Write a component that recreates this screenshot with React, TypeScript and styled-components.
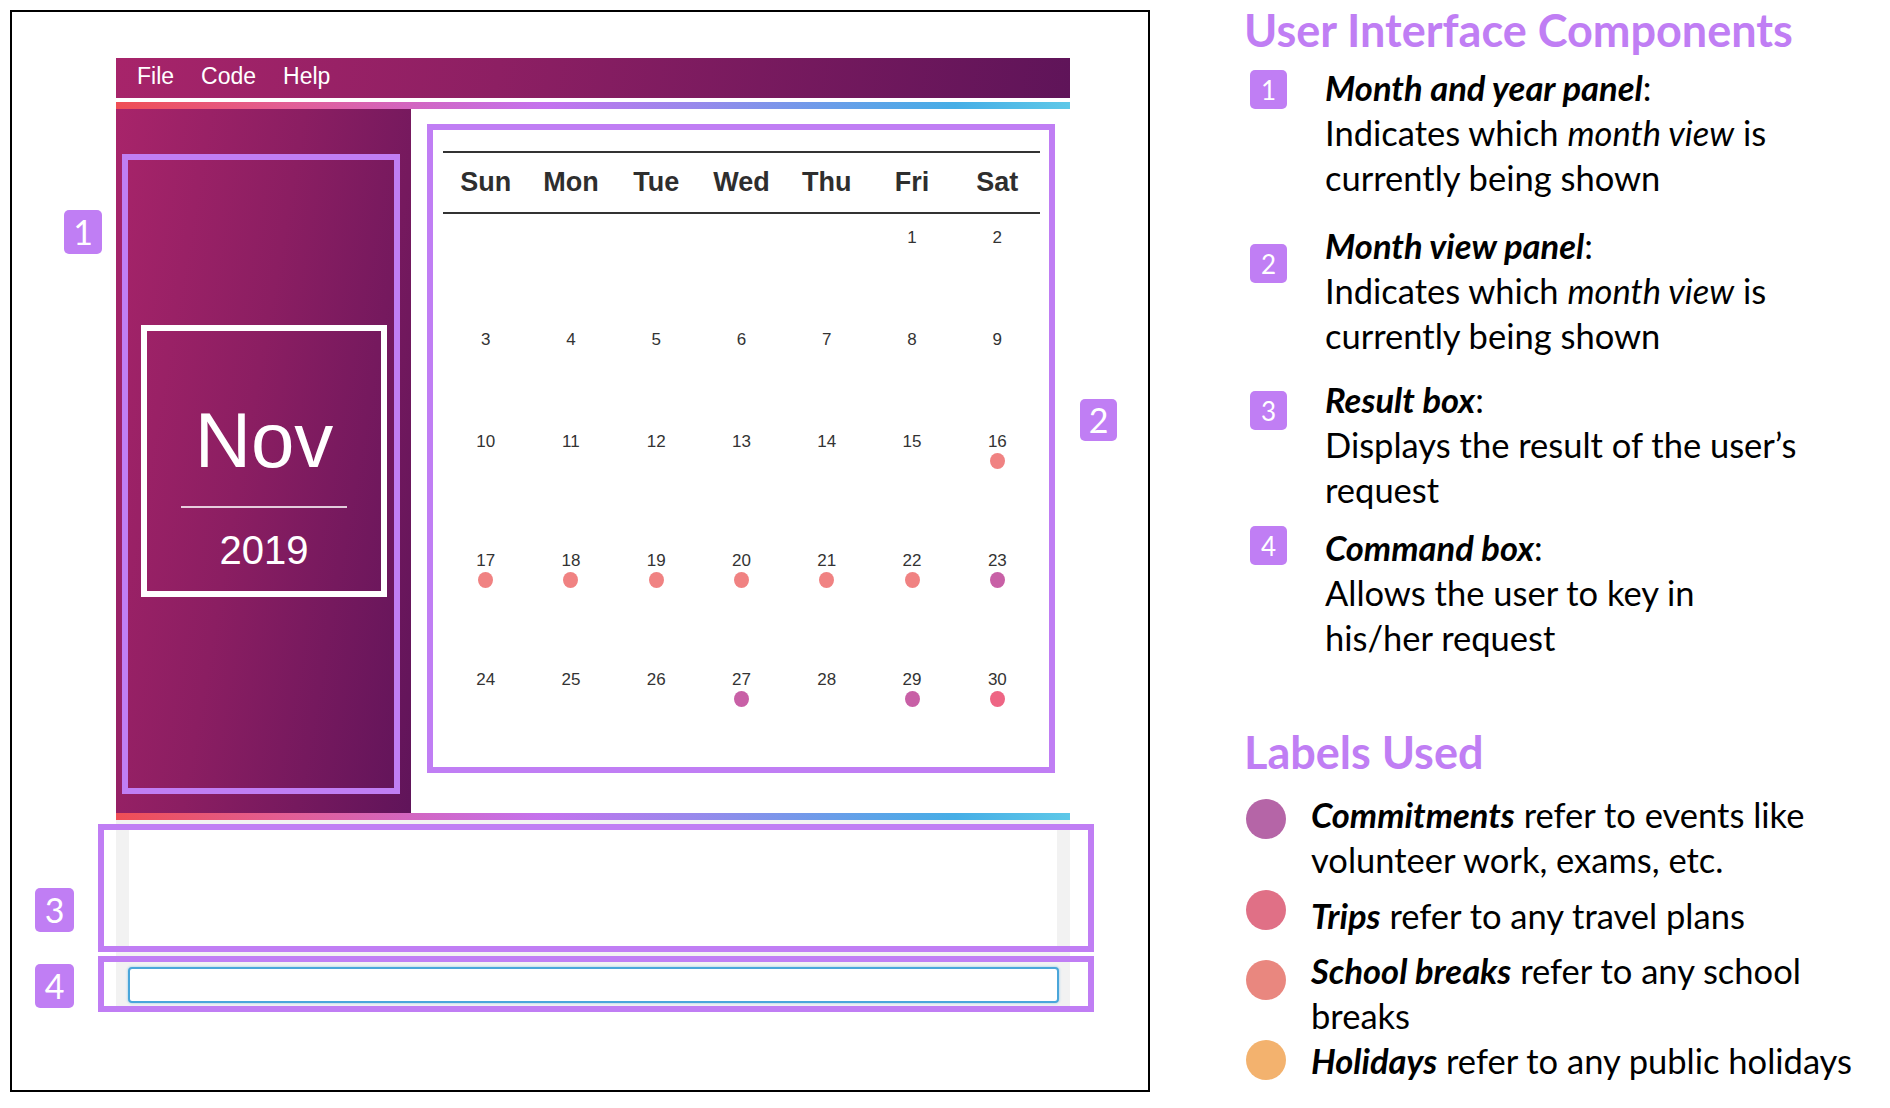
import React from "react";
import styled, { createGlobalStyle } from "styled-components";

const LAVENDER = "#c07ef4";

const GlobalStyle = createGlobalStyle`
  html, body {
    margin: 0;
    padding: 0;
    background: #fff;
  }
  body {
    font-family: "Liberation Sans", Arial, sans-serif;
  }
`;

const Page = styled.div`
  display: flex;
  align-items: flex-start;
  width: 1890px;
  height: 1108px;
  overflow: hidden;
`;

/* ---------- screenshot frame ---------- */

const Frame = styled.div`
  box-sizing: border-box;
  flex: none;
  width: 1140px;
  height: 1082px;
  margin: 10px 0 0 10px;
  border: 2px solid #000;
  padding: 46px 0 0 104px;
`;

const AppWindow = styled.div`
  width: 954px;
  display: flex;
  flex-direction: column;
`;

const MenuBar = styled.div`
  height: 40px;
  box-sizing: border-box;
  padding: 0 0 4px 21px;
  display: flex;
  align-items: flex-end;
  gap: 27px;
  background: linear-gradient(100deg, #a7246a 0%, #8d1f63 40%, #5f1459 100%);
`;

const MenuItem = styled.span`
  color: #fff;
  font-size: 23px;
  line-height: 36px;
`;

const Stripe = styled.div<{ $gapTop?: number }>`
  height: 7px;
  margin-top: ${(p) => p.$gapTop ?? 0}px;
  background: linear-gradient(
    to right,
    #ef4e55 0%,
    #e25e95 18%,
    #d166c4 32%,
    #c472ee 45%,
    #9a88ec 60%,
    #5aa4e8 80%,
    #46aee6 88%,
    #5ec8e8 100%
  );
`;

const AppBody = styled.div`
  display: flex;
  height: 704px;
`;

const MonthPanel = styled.div`
  box-sizing: border-box;
  width: 295px;
  display: flex;
  padding: 45px 11px 19px 6px;
  background: linear-gradient(100deg, #a8246a 0%, #8b1e62 45%, #60145a 100%);
`;

const Callout = styled.div`
  position: relative;
  box-sizing: border-box;
  border: 6px solid ${LAVENDER};
`;

const Badge = styled.div<{ $w: number; $h: number; $size: number }>`
  display: flex;
  align-items: center;
  justify-content: center;
  width: ${(p) => p.$w}px;
  height: ${(p) => p.$h}px;
  border-radius: 5px;
  background: ${LAVENDER};
  color: #fff;
  font-family: Lato, "Liberation Sans", sans-serif;
  font-size: ${(p) => p.$size}px;
  line-height: 1;
  flex: none;
`;

const SideBadge = styled(Badge)<{ $left: string; $top: number }>`
  position: absolute;
  left: ${(p) => p.$left};
  top: ${(p) => p.$top}px;
`;

const MonthCallout = styled(Callout)`
  flex: 1;
  padding: 165px 0 0 13px;
`;

const NovCard = styled.div`
  box-sizing: border-box;
  width: 246px;
  height: 272px;
  border: 6px solid #fff;
  padding-top: 70px;
  display: flex;
  flex-direction: column;
  align-items: center;
  color: #fff;
`;

const MonthName = styled.div`
  font-size: 78px;
  line-height: 78px;
`;

const Divider = styled.div`
  width: 166px;
  height: 2px;
  margin: 27px 0 22px;
  background: rgba(255, 255, 255, 0.78);
`;

const YearName = styled.div`
  font-size: 40px;
  line-height: 40px;
`;

const CalendarArea = styled.div`
  flex: 1;
  padding: 15px 15px 0 16px;
  background: #fff;
`;

const CalendarCallout = styled(Callout)`
  height: 649px;
  padding: 21px 9px 0 10px;
`;

const WeekHeader = styled.div`
  display: grid;
  grid-template-columns: repeat(7, 1fr);
  border-top: 2px solid #333;
  border-bottom: 2px solid #333;
`;

const WeekDay = styled.div`
  text-align: center;
  font-size: 27px;
  font-weight: 700;
  line-height: 59px;
  color: #2e2e2e;
`;

const DayGrid = styled.div`
  display: grid;
  grid-template-columns: repeat(7, 1fr);
`;

const DayCell = styled.div`
  display: flex;
  flex-direction: column;
  align-items: center;
  padding: 14px 0 68px;
`;

const DayNumber = styled.div`
  font-size: 17px;
  line-height: 20px;
  color: #333;
  min-height: 20px;
`;

const EventDot = styled.div<{ $color: string }>`
  width: 15px;
  height: 16px;
  margin-top: 1px;
  border-radius: 50%;
  background: ${(p) => p.$color};
`;

const ResultPane = styled.div`
  background: #f2f2f2;
  padding-top: 4px;
`;

const WideCallout = styled(Callout)<{ $gapTop?: number }>`
  margin: ${(p) => p.$gapTop ?? 0}px -24px 0 -18px;
`;

const ResultCallout = styled(WideCallout)`
  padding: 0 31px 0 25px;
`;

const ResultArea = styled.div`
  height: 116px;
  background: #fff;
`;

const CommandCallout = styled(WideCallout)`
  padding: 5px 29px 3px 24px;
`;

const CommandInput = styled.input`
  display: block;
  box-sizing: border-box;
  width: 100%;
  height: 36px;
  border: 2px solid #4aa6da;
  border-radius: 4px;
  background: #fff;
  box-shadow: 0 0 2px 1px rgba(110, 185, 230, 0.35);
  outline: none;
`;

/* ---------- notes on the right ---------- */

const Notes = styled.div`
  margin-left: 94px;
  padding-top: 5px;
  font-family: Lato, "Liberation Sans", sans-serif;
  color: #000;
  display: flex;
  flex-direction: column;
`;

const Heading = styled.div<{ $gapTop?: number }>`
  margin-top: ${(p) => p.$gapTop ?? 0}px;
  color: ${LAVENDER};
  font-size: 45px;
  font-weight: 700;
  line-height: 50px;
  white-space: nowrap;
`;

const NoteRow = styled.div<{ $gapTop: number }>`
  display: flex;
  align-items: flex-start;
  margin-top: ${(p) => p.$gapTop}px;
`;

const NoteBadge = styled(Badge)<{ $offset: number }>`
  margin: ${(p) => p.$offset}px 38px 0 6px;
`;

const LegendDot = styled.div<{ $color: string; $offset: number }>`
  flex: none;
  width: 40px;
  height: 40px;
  border-radius: 50%;
  margin: ${(p) => p.$offset}px 25px 0 2px;
  background: ${(p) => p.$color};
`;

const NoteText = styled.div`
  font-size: 34.5px;
  line-height: 45px;
  white-space: nowrap;
`;

const Term = styled.b`
  font-style: italic;
  font-weight: 700;
`;

const DOT = {
  commitment: "#c860a6",
  trip: "#ee6584",
  school: "#f08282",
};

type Day = { n?: number; dot?: string };

const weeks: Day[][] = [
  [{}, {}, {}, {}, {}, { n: 1 }, { n: 2 }],
  [3, 4, 5, 6, 7, 8, 9].map((n) => ({ n })),
  [10, 11, 12, 13, 14, 15].map((n) => ({ n } as Day)).concat([{ n: 16, dot: DOT.school }]),
  [17, 18, 19, 20, 21, 22]
    .map((n) => ({ n, dot: DOT.school } as Day))
    .concat([{ n: 23, dot: DOT.commitment }]),
  [
    { n: 24 },
    { n: 25 },
    { n: 26 },
    { n: 27, dot: DOT.commitment },
    { n: 28 },
    { n: 29, dot: DOT.commitment },
    { n: 30, dot: DOT.trip },
  ],
];

const weekDays = ["Sun", "Mon", "Tue", "Wed", "Thu", "Fri", "Sat"];

const notes = [
  {
    n: 1,
    gap: 10,
    offset: 5,
    title: "Month and year panel",
    lines: [
      <>
        Indicates which <i>month view</i> is
      </>,
      "currently being shown",
    ],
  },
  {
    n: 2,
    gap: 23,
    offset: 21,
    title: "Month view panel",
    lines: [
      <>
        Indicates which <i>month view</i> is
      </>,
      "currently being shown",
    ],
  },
  {
    n: 3,
    gap: 19,
    offset: 14,
    title: "Result box",
    lines: ["Displays the result of the user\u2019s", "request"],
  },
  {
    n: 4,
    gap: 13,
    offset: 1,
    title: "Command box",
    lines: ["Allows the user to key in", "his/her request"],
  },
];

const labels = [
  {
    color: "#b565a7",
    gap: 15,
    offset: 7,
    term: "Commitments",
    lines: [" refer to events like", "volunteer work, exams, etc."],
  },
  { color: "#e07086", gap: 11, offset: -3, term: "Trips", lines: [" refer to any travel plans"] },
  {
    color: "#e9877f",
    gap: 10,
    offset: 12,
    term: "School breaks",
    lines: [" refer to any school", "breaks"],
  },
  { color: "#f3b26e", gap: 0, offset: 2, term: "Holidays", lines: [" refer to any public holidays"] },
];

export default function App() {
  return (
    <Page>
      <GlobalStyle />
      <Frame>
        <AppWindow>
          <MenuBar>
            <MenuItem>File</MenuItem>
            <MenuItem>Code</MenuItem>
            <MenuItem>Help</MenuItem>
          </MenuBar>
          <Stripe $gapTop={4} />
          <AppBody>
            <MonthPanel>
              <MonthCallout>
                <SideBadge $w={38} $h={44} $size={34} $left="-64px" $top={50}>
                  1
                </SideBadge>
                <NovCard>
                  <MonthName>Nov</MonthName>
                  <Divider />
                  <YearName>2019</YearName>
                </NovCard>
              </MonthCallout>
            </MonthPanel>
            <CalendarArea>
              <CalendarCallout>
                <SideBadge $w={37} $h={42} $size={34} $left="calc(100% + 31px)" $top={269}>
                  2
                </SideBadge>
                <WeekHeader>
                  {weekDays.map((d) => (
                    <WeekDay key={d}>{d}</WeekDay>
                  ))}
                </WeekHeader>
                <DayGrid>
                  {weeks.flat().map((d, i) => (
                    <DayCell key={i}>
                      <DayNumber>{d.n ?? ""}</DayNumber>
                      {d.dot && <EventDot $color={d.dot} />}
                    </DayCell>
                  ))}
                </DayGrid>
              </CalendarCallout>
            </CalendarArea>
          </AppBody>
          <Stripe />
          <ResultPane>
            <ResultCallout>
              <SideBadge $w={39} $h={44} $size={34} $left="-69px" $top={58}>
                3
              </SideBadge>
              <ResultArea />
            </ResultCallout>
            <CommandCallout $gapTop={4}>
              <SideBadge $w={39} $h={44} $size={34} $left="-69px" $top={2}>
                4
              </SideBadge>
              <CommandInput aria-label="command" />
            </CommandCallout>
          </ResultPane>
        </AppWindow>
      </Frame>

      <Notes>
        <Heading>User Interface Components</Heading>
        {notes.map((note) => (
          <NoteRow key={note.n} $gapTop={note.gap}>
            <NoteBadge $w={37} $h={39} $size={26} $offset={note.offset}>
              {note.n}
            </NoteBadge>
            <NoteText>
              <div>
                <Term>{note.title}</Term>:
              </div>
              {note.lines.map((l, i) => (
                <div key={i}>{l}</div>
              ))}
            </NoteText>
          </NoteRow>
        ))}

        <Heading $gapTop={67}>Labels Used</Heading>
        {labels.map((lb) => (
          <NoteRow key={lb.term} $gapTop={lb.gap}>
            <LegendDot $color={lb.color} $offset={lb.offset} />
            <NoteText>
              <div>
                <Term>{lb.term}</Term>
                {lb.lines[0]}
              </div>
              {lb.lines.slice(1).map((l, i) => (
                <div key={i}>{l}</div>
              ))}
            </NoteText>
          </NoteRow>
        ))}
      </Notes>
    </Page>
  );
}
